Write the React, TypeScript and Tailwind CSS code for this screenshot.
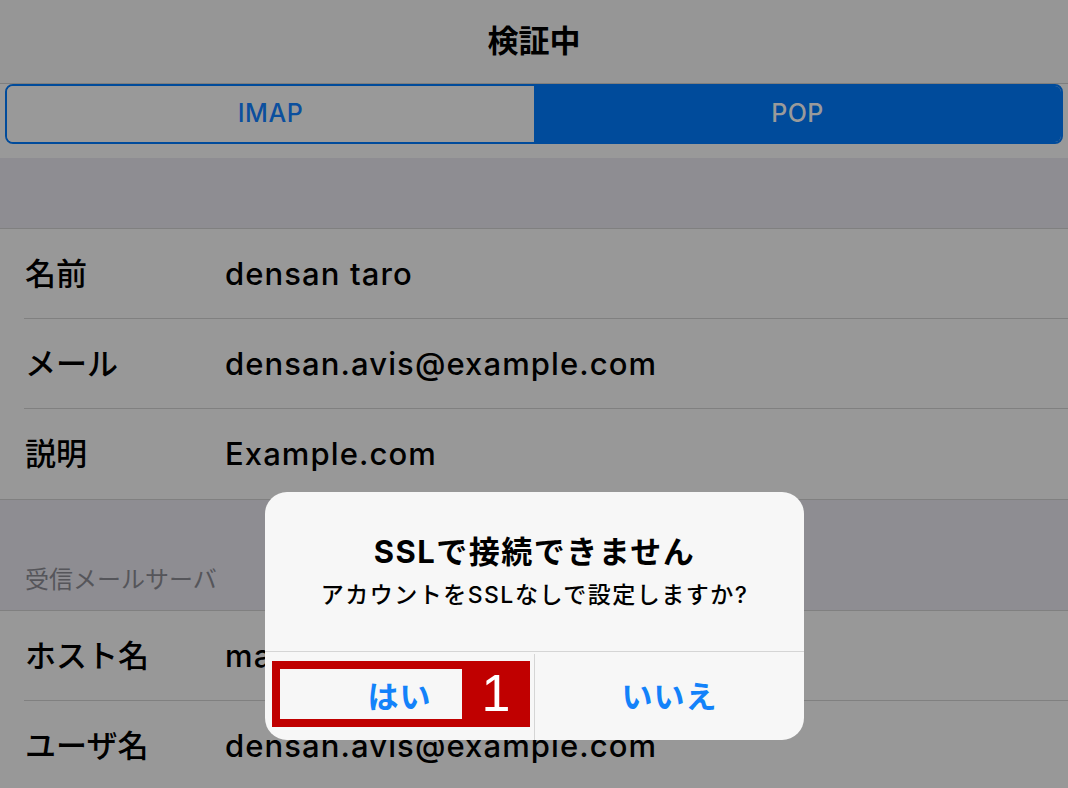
import React from "react";

const font = { fontFamily: '"Inter", "Noto Sans CJK JP", sans-serif' };

function Row({ label, value, last }: { label: string; value: string; last?: boolean }) {
  return (
    <div className="relative h-[90px] bg-[#989898] flex items-center">
      <div className="w-[225px] pl-[25px] text-[31px] font-medium text-black">{label}</div>
      <div className="text-[31px] font-medium text-black tracking-[1.1px] whitespace-nowrap">{value}</div>
      {!last && <div className="absolute bottom-0 left-[24px] right-0 h-px bg-[#808080]" />}
    </div>
  );
}

export default function App() {
  return (
    <div className="relative w-[1068px] h-[788px] overflow-hidden bg-[#8e8d92]" style={font}>
      {/* Nav */}
      <div className="h-[84px] bg-[#969696] border-b border-[#7e7e7e] flex items-center justify-center">
        <span className="text-[31px] font-bold text-black">検証中</span>
      </div>
      {/* Segmented */}
      <div className="h-[74px] bg-[#999999] px-[5px] pt-0">
        <div className="h-[60px] flex rounded-[8px] border-2 border-[#004b9b] overflow-hidden">
          <div className="flex-1 flex items-center justify-center bg-[#999999] text-[#0b4f9e] text-[25px] font-medium tracking-[0.5px]">
            <span>IMAP</span>
          </div>
          <div className="flex-1 flex items-center justify-center bg-[#004b9b] text-[#9a9a9a] text-[25px] font-medium tracking-[0.5px]">
            <span>POP</span>
          </div>
        </div>
      </div>
      {/* section gap */}
      <div className="h-[71px] bg-[#8e8d92] border-b border-[#808080]" />
      <Row label="名前" value="densan taro" />
      <Row label="メール" value="densan.avis@example.com" />
      <Row label="説明" value="Example.com" last />
      <div className="h-[112px] bg-[#8e8d92] border-t border-[#808080] border-b flex items-end pb-[12px] pl-[25px]">
        <span className="text-[24px] text-[#55555a]">受信メールサーバ</span>
      </div>
      <Row label="ホスト名" value="mail.example.com" />
      <Row label="ユーザ名" value="densan.avis@example.com" last />

      {/* Alert */}
      <div className="absolute left-[265px] top-[492px] w-[539px] h-[248px] rounded-[22px] bg-[#f7f7f7] flex flex-col overflow-hidden">
        <div className="h-[160px] flex flex-col items-center pt-[40px] border-b border-[#d5d5d5]">
          <div className="text-[31px] font-bold text-black leading-[40px] tracking-[1.5px]">SSLで接続できません</div>
          <div className="text-[23px] font-medium text-black leading-[30px] mt-[8px] tracking-[1.5px]">
            アカウントをSSLなしで設定しますか?
          </div>
        </div>
        <div className="flex-1 flex pt-[2px]">
          <div className="w-[270px] border-r border-[#d5d5d5] flex items-center justify-center text-[31px] font-semibold text-[#1382fa] tracking-[1px]">
            <span>はい</span>
          </div>
          <div className="flex-1 flex items-center justify-center text-[31px] font-semibold text-[#1382fa] tracking-[1px]">
            <span>いいえ</span>
          </div>
        </div>
      </div>

      {/* Annotation frame */}
      <div className="absolute left-[272px] top-[661px] w-[258px] h-[66px] border-[#c00000] border-[8px] border-r-0 flex">
        <div className="w-[182px]" />
        <div className="flex-1 bg-[#c00000] flex items-center justify-center pb-[2px]">
          <span
            className="text-white text-[52px] font-normal leading-none"
            style={{ fontFamily: '"Liberation Sans", sans-serif' }}
          >
            1
          </span>
        </div>
      </div>
    </div>
  );
}
